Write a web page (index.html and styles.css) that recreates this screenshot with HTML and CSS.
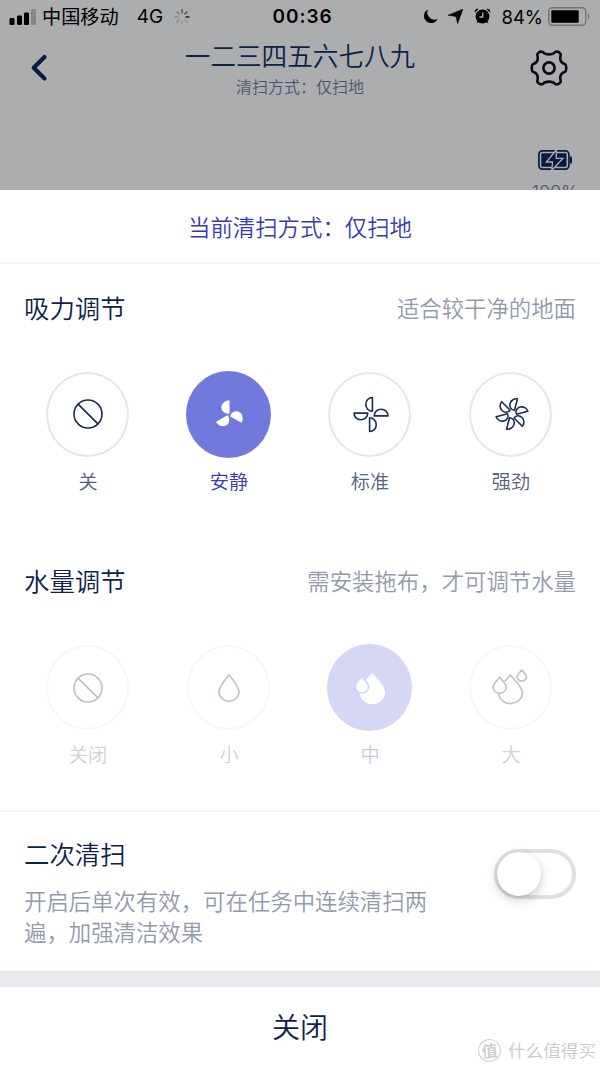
FILE: index.html
```html
<!DOCTYPE html>
<html lang="zh-CN">
<head>
<meta charset="utf-8">
<title>清扫方式</title>
<link rel="stylesheet" href="styles.css">
</head>
<body>
<div class="screen">
  <header class="backdrop">
    <div class="status">
      <div class="status-left">
        <svg class="signal" width="28" height="16" viewBox="0 0 28 16"><rect x="0.5" y="9" width="5" height="7" rx="1.3"/><rect x="8" y="6.500" width="5" height="9.500" rx="1.300"/><rect x="15" y="3.500" width="5" height="12.500" rx="1.300"/><rect x="22" y="0" width="5" height="16" rx="1.300" fill="#858688"/></svg>
        <span class="carrier">中国移动</span>
        <span class="network">4G</span>
        <svg class="spinner" width="18" height="18" viewBox="-9 -9 18 18" fill="none" stroke-width="1.500" stroke-linecap="round"><path stroke="#222" d="M4 0H7"/><path stroke="#555" d="M0-4.300V-7.300M3-3 5-5"/><path stroke="#777" d="M-3-3-5-5"/><path stroke="#888" d="M-4 0H-7M-3 3-5 5"/><path stroke="#929395" d="M0 4.300V7.300M3 3 5 5"/></svg>
      </div>
      <span class="clock">00:36</span>
      <div class="status-right">
        <svg width="15" height="15" viewBox="0 0 15 15"><path d="M5 .4A7.200 7.200 0 1 0 14.600 10 7.200 7.200 0 0 1 5 .4Z"/></svg>
        <svg class="arrow" width="15" height="15" viewBox="0 0 15 15"><path d="M14.800.2 9.600 14.500 8 7.500.2 6.200Z" stroke="#000" stroke-width=".6"/></svg>
        <svg class="alarm" width="17" height="17" viewBox="0 0 17 17"><circle cx="8.500" cy="8.500" r="6.900"/><path d="M.8 4.600A3 3 0 0 1 4.700.9ZM16.200 4.600A3 3 0 0 0 12.300.9ZM4.300 12 2.500 15.300 5.500 14ZM12.700 12 14.500 15.300 11.500 14Z"/><path d="M8.700 4.500V9H5.400" fill="none" stroke="#acadaf" stroke-width="1.400"/></svg>
        <span class="percent">84%</span>
        <svg class="power" width="43" height="19" viewBox="0 0 43 19"><rect x=".8" y=".8" width="37" height="17.400" rx="3.500" fill="none" stroke="#747577" stroke-width="1.400"/><rect x="3.300" y="3.300" width="27.400" height="12.400" rx="1"/><path d="M40 6.300Q43 9.500 40 12.700Z" fill="#747577"/></svg>
      </div>
    </div>
    <div class="nav">
      <svg class="back" width="20" height="30" viewBox="0 0 20 30" fill="none" stroke="#081b40" stroke-width="4.200" stroke-linecap="round" stroke-linejoin="round"><path d="M15.500 4 4.700 14.700 15.500 25.400"/></svg>
      <div class="nav-text">
        <h1 class="nav-title">一二三四五六七八九</h1>
        <p class="nav-sub">清扫方式：仅扫地</p>
      </div>
      <svg class="gear" width="40" height="40" viewBox="-20 -20 40 40" fill="none" stroke="#0b0c0f" stroke-width="2.600" stroke-linejoin="round"><path d="M-10.500-15.300Q-8.500-17-6.200-16C-3.500-12.800 3.500-12.800 6.200-16Q8.500-17 10.500-15.300Q12.200-14 11.500-12C10.500-8 12.500-5 16-3.800Q17.200-3.200 17.200 0Q17.200 3.200 16 3.800C12.500 5 10.500 8 11.500 12Q12.200 14 10.500 15.300Q8.500 17 6.200 16C3.500 12.800-3.500 12.800-6.200 16Q-8.500 17-10.500 15.300Q-12.200 14-11.500 12C-10.500 8-12.500 5-16 3.800Q-17.200 3.200-17.200 0Q-17.200-3.200-16-3.800C-12.500-5-10.500-8-11.500-12Q-12.200-14-10.500-15.300Z"/><circle r="5.600"/></svg>
    </div>
    <div class="robot-power">
      <svg width="36" height="22" viewBox="0 0 36 22"><rect x="1.900" y="1.900" width="30" height="18.200" rx="3.500" fill="none" stroke="#081b40" stroke-width="1.700"/><path d="M33 7.500h1q1 0 1 1v5q0 1-1 1h-1Z" fill="#081b40"/><rect x="4.300" y="4.300" width="25.200" height="13.400" rx="1" fill="#081b40"/><path d="M19.300 1 9.300 13H15.500L14.800 21.300 26 9.300H19.300Z" fill="#081b40" stroke="#acadaf" stroke-width="1.300"/></svg>
      <span class="robot-percent">100%</span>
    </div>
  </header>

  <main class="sheet">
    <div class="mode">当前清扫方式：仅扫地</div>

    <section class="group">
      <div class="group-head"><h2 class="heading">吸力调节</h2><span class="hint">适合较干净的地面</span></div>
      <div class="options">
        <div class="option">
          <div class="dial"><svg class="icon" viewBox="-30 -30 60 60"><circle r="14"/><path d="M-9.900-9.900 9.900 9.900"/></svg></div>
          <span class="label">关</span>
        </div>
        <div class="option selected">
          <div class="dial"><svg class="icon solid" viewBox="-30 -31 60 60"><defs><path id="wide-blade" d="M.5-14.800V-1.500C-3.500-.6-7.600-3.500-7.700-7.400S-4.300-14.400.5-14.800Z"/></defs><use href="#wide-blade"/><use href="#wide-blade" transform="rotate(120)"/><use href="#wide-blade" transform="rotate(240)"/></svg></div>
          <span class="label">安静</span>
        </div>
        <div class="option">
          <div class="dial"><svg class="icon" viewBox="-31 -30.500 60 60"><defs><path id="blade" d="M1.400-17V-3.200C-2.500-3.200-5.200-6.300-5.200-10.200S-2.500-17 1.400-17Z"/></defs><use href="#blade"/><use href="#blade" transform="rotate(90)"/><use href="#blade" transform="rotate(180)"/><use href="#blade" transform="rotate(270)"/></svg></div>
          <span class="label">标准</span>
        </div>
        <div class="option">
          <div class="dial"><svg class="icon" viewBox="-31 -30 60 60"><defs><path id="slim-blade" d="M1.400-16V-4.300C-2-3.600-4.600-6-4.600-9.500S-1.800-15.900 1.400-16Z"/></defs><use href="#slim-blade" transform="rotate(15)"/><use href="#slim-blade" transform="rotate(75)"/><use href="#slim-blade" transform="rotate(135)"/><use href="#slim-blade" transform="rotate(195)"/><use href="#slim-blade" transform="rotate(255)"/><use href="#slim-blade" transform="rotate(315)"/></svg></div>
          <span class="label">强劲</span>
        </div>
      </div>
    </section>

    <section class="group disabled">
      <div class="group-head"><h2 class="heading">水量调节</h2><span class="hint">需安装拖布，才可调节水量</span></div>
      <div class="options">
        <div class="option">
          <div class="dial"><svg class="icon" viewBox="-30 -30 60 60"><circle r="14"/><path d="M-9.900-9.900 9.900 9.900"/></svg></div>
          <span class="label">关闭</span>
        </div>
        <div class="option">
          <div class="dial"><svg class="icon" viewBox="-30 -30 60 60"><path d="M0-13.200C-3-9.500-9.900-1.500-9.900 3.700A9.900 9.600 0 0 0 9.900 3.700C9.900-1.500 3-9.500 0-13.200Z"/></svg></div>
          <span class="label">小</span>
        </div>
        <div class="option selected">
          <div class="dial"><svg class="icon solid" viewBox="-30 -30 60 60"><path d="M2.300-15.500C6-11 15.200-1.500 15.200 4.500A12.800 11.700 0 0 1-10.400 4.500C-10.400-1.500-1.500-11 2.300-15.500Z"/><path class="front-drop" d="M-8.300-11.500C-5.800-8.500-1.200-4.500-1.200-1.500A6.900 6.500 0 0 1-15-1.500C-15-4.500-11-8.500-8.300-11.500Z"/></svg></div>
          <span class="label">中</span>
        </div>
        <div class="option">
          <div class="dial"><svg class="icon" viewBox="-30 -30 60 60"><path d="M-5.900-6.900-.7-13.100C3-8.500 11.600-1 11.600 5.300A12.200 11.600 0 0 1-12.500 6.200"/><path d="M-11.300-10.800C-9-8-4.700-4-4.700-.4A6.700 6.400 0 0 1-18-.4C-18-4-13.700-8-11.300-10.800Z"/><path d="M10.700-18C12.500-15.800 15.500-13.300 15.500-10.900A4.800 4.400 0 0 1 6-10.900C6-13.300 9-15.800 10.700-18Z"/></svg></div>
          <span class="label">大</span>
        </div>
      </div>
    </section>

    <section class="repeat">
      <div class="repeat-text">
        <h2 class="heading">二次清扫</h2>
        <p class="description">开启后单次有效，可在任务中连续清扫两遍，加强清洁效果</p>
      </div>
      <div class="switch"><div class="knob"></div></div>
    </section>

    <footer class="close">关闭
      <div class="watermark"><span class="seal">值</span><span>什么值得买</span></div>
    </footer>
  </main>
</div>
</body>
</html>
```
FILE: styles.css
```css
* { box-sizing: border-box; }
body { margin: 0; font-family: "Noto Sans CJK SC", sans-serif; font-weight: 350; color: #0e2249; background: #fff; }
h1, h2, p { margin: 0; font-weight: inherit; }
svg { display: block; flex: none; }
.screen { width: 600px; height: 1067px; overflow: hidden; display: flex; flex-direction: column; }

.backdrop { height: 190px; flex: none; overflow: hidden; background: #acadaf; }
.status { display: grid; grid-template-columns: 1fr auto 1fr; align-items: center; height: 33px; padding: 0 9px; color: #000; line-height: 32px; }
.status-left, .status-right { display: flex; align-items: center; }
.status-right { justify-content: flex-end; }
.carrier { margin-left: 5px; font-size: 19.200px; font-weight: 400; line-height: 30px; padding-bottom: 2px; }
.network { margin-left: 18px; font-family: Inter, sans-serif; font-size: 19px; font-weight: 400; }
.spinner { margin-left: 10px; }
.clock { font-family: Inter, sans-serif; font-size: 19px; font-weight: 600; letter-spacing: .9px; padding-left: 5px; }
.arrow { margin-left: 10px; }
.alarm { margin-left: 11px; }
.percent { margin-left: 10px; font-family: Inter, sans-serif; font-size: 18.500px; font-weight: 400; }
.power { margin-left: 5px; }

.nav { display: flex; justify-content: space-between; align-items: center; height: 70px; padding: 0 31px 0 29px; }
.nav-text { text-align: center; padding-left: 22px; }
.nav-title { font-size: 25.600px; line-height: 36px; }
.nav-sub { font-size: 16px; line-height: 26px; color: #4b556f; }
.robot-power { display: flex; flex-direction: column; align-items: center; width: 50px; margin: 46px 0 0 530px; color: #4c5670; }
.robot-percent { font-family: Inter, sans-serif; font-size: 18px; line-height: 20px; margin-top: 12px; font-weight: 300; }

.sheet { flex: 1; background: #fff; }
.mode { height: 74px; border-bottom: 2px solid #f5f5f6; text-align: center; font-size: 22.400px; line-height: 73px; color: #373bb0; }
.group { height: 273px; padding-top: 21px; }
.group-head { display: flex; justify-content: space-between; align-items: center; height: 44px; padding: 0 24px; }
.heading { font-size: 25.400px; line-height: 44px; }
.hint { font-size: 22.400px; line-height: 42px; padding-bottom: 1px; color: #929aac; }
.options { display: grid; grid-template-columns: repeat(4, 1fr); padding: 42px 19px 0 17px; }
.option { display: flex; flex-direction: column; align-items: center; }
.dial { width: 83px; height: 85px; margin: 1px; display: flex; align-items: center; justify-content: center; border: 2px solid #e3e6ec; border-radius: 50%; }
.icon { width: 60px; height: 60px; margin-top: -1px; fill: none; stroke: #1a2d52; stroke-width: 1.600; stroke-linejoin: round; stroke-linecap: round; }
.label { font-size: 19.200px; line-height: 28px; margin-top: 9px; padding-left: 1px; color: #53617d; }
.selected .dial { width: 85px; height: 87px; margin: 0; border: 0; background: #7179dc; }
.selected .label { color: #373bb0; }
.icon.solid { fill: #fff; stroke: none; }

.disabled .dial { border-color: #f7f7f8; }
.disabled .icon { margin-top: 0; stroke: #bac1cc; }
.disabled .label { color: #ced2db; }
.disabled .selected .dial { background: #d6d7f4; }
.disabled .selected .label { color: #c6c8ea; }
.disabled .icon.solid { stroke: none; }
.disabled .front-drop { stroke: #d6d7f4; stroke-width: 1.800; }

.repeat { display: flex; justify-content: space-between; height: 161px; border-top: 2px solid #f5f5f6; padding: 19px 24px 0; }
.repeat-text { width: 410px; }
.description { margin-top: 10px; font-size: 22.400px; line-height: 31px; color: #929aac; }
.switch { width: 82px; height: 50px; margin-top: 18px; border: 4px solid #e0e0e1; border-radius: 25px; }
.knob { width: 44px; height: 44px; margin: -1px; border-radius: 50%; background: #fff; box-shadow: 0 4px 12px rgba(0, 0, 0, .2), 0 1px 2px rgba(0, 0, 0, .08); }

.close { position: relative; height: 96px; border-top: 16px solid #e8e9ed; text-align: center; font-size: 28px; line-height: 79px; }
.watermark { position: absolute; right: 4px; bottom: 2px; display: flex; align-items: center; gap: 7px; font-size: 17.600px; line-height: 30px; color: #c9c9c9; }
.seal { width: 23px; height: 23px; border: 1px solid #d2d2d2; border-radius: 50%; font-size: 16px; line-height: 20px; font-weight: 500; transform: rotate(-6deg); }
```
